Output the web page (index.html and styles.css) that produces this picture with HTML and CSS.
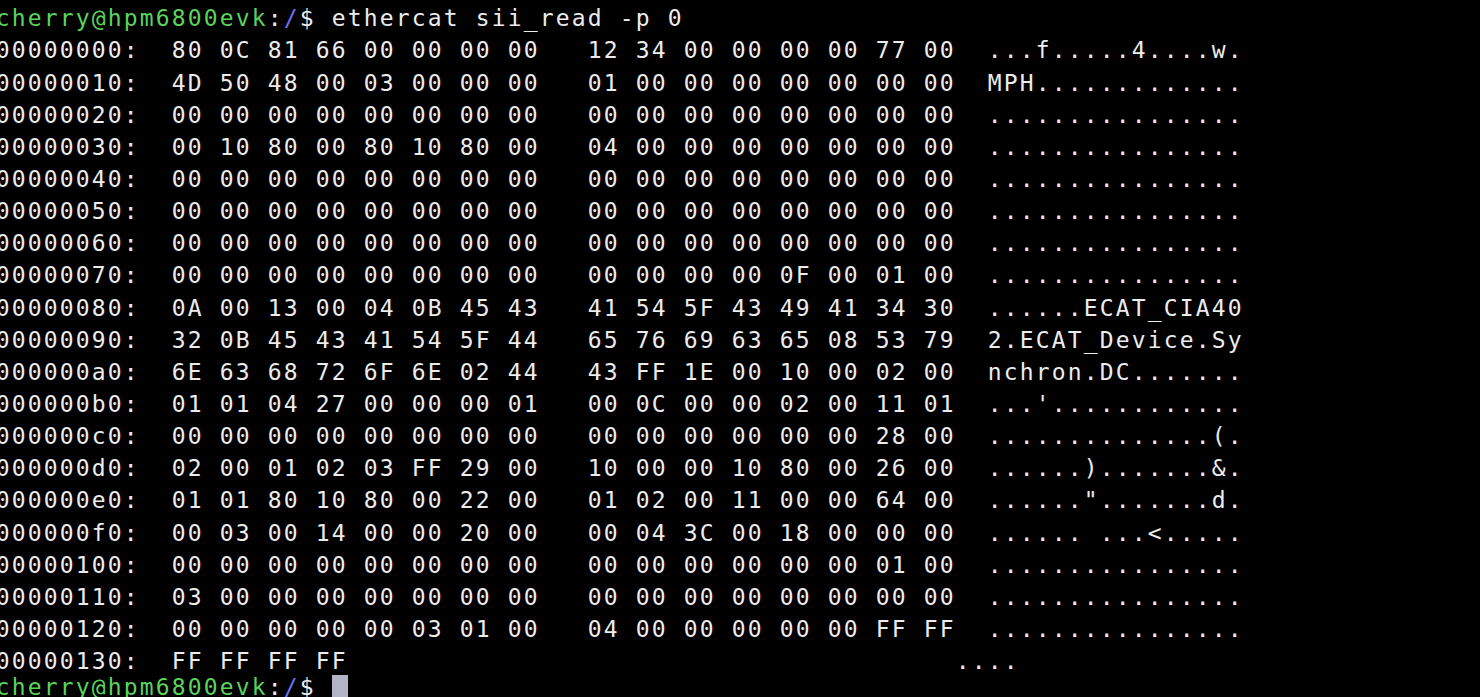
FILE: index.html
```html
<!DOCTYPE html>
<html lang="en">
<head>
<meta charset="utf-8">
<title>ethercat sii_read</title>
<link rel="stylesheet" href="styles.css">
</head>
<body>
<div class="term">
<div class="line"><span class="user">cherry@hpm6800evk</span>:<span class="path">/</span>$ ethercat sii_read -p 0</div>
<div class="line">00000000:  80 0C 81 66 00 00 00 00   12 34 00 00 00 00 77 00  ...f.....4....w.</div>
<div class="line">00000010:  4D 50 48 00 03 00 00 00   01 00 00 00 00 00 00 00  MPH.............</div>
<div class="line">00000020:  00 00 00 00 00 00 00 00   00 00 00 00 00 00 00 00  ................</div>
<div class="line">00000030:  00 10 80 00 80 10 80 00   04 00 00 00 00 00 00 00  ................</div>
<div class="line">00000040:  00 00 00 00 00 00 00 00   00 00 00 00 00 00 00 00  ................</div>
<div class="line">00000050:  00 00 00 00 00 00 00 00   00 00 00 00 00 00 00 00  ................</div>
<div class="line">00000060:  00 00 00 00 00 00 00 00   00 00 00 00 00 00 00 00  ................</div>
<div class="line">00000070:  00 00 00 00 00 00 00 00   00 00 00 00 0F 00 01 00  ................</div>
<div class="line">00000080:  0A 00 13 00 04 0B 45 43   41 54 5F 43 49 41 34 30  ......ECAT_CIA40</div>
<div class="line">00000090:  32 0B 45 43 41 54 5F 44   65 76 69 63 65 08 53 79  2.ECAT_Device.Sy</div>
<div class="line">000000a0:  6E 63 68 72 6F 6E 02 44   43 FF 1E 00 10 00 02 00  nchron.DC.......</div>
<div class="line">000000b0:  01 01 04 27 00 00 00 01   00 0C 00 00 02 00 11 01  ...'............</div>
<div class="line">000000c0:  00 00 00 00 00 00 00 00   00 00 00 00 00 00 28 00  ..............(.</div>
<div class="line">000000d0:  02 00 01 02 03 FF 29 00   10 00 00 10 80 00 26 00  ......).......&amp;.</div>
<div class="line">000000e0:  01 01 80 10 80 00 22 00   01 02 00 11 00 00 64 00  ......".......d.</div>
<div class="line">000000f0:  00 03 00 14 00 00 20 00   00 04 3C 00 18 00 00 00  ...... ...&lt;.....</div>
<div class="line">00000100:  00 00 00 00 00 00 00 00   00 00 00 00 00 00 01 00  ................</div>
<div class="line">00000110:  03 00 00 00 00 00 00 00   00 00 00 00 00 00 00 00  ................</div>
<div class="line">00000120:  00 00 00 00 00 03 01 00   04 00 00 00 00 00 FF FF  ................</div>
<div class="line">00000130:  FF FF FF FF                                      ....</div>
<div class="line prompt-bottom"><span class="user">cherry@hpm6800evk</span>:<span class="path">/</span>$ <span class="cursor"></span></div>
</div>
</body>
</html>
```

FILE: styles.css
```css
html, body {
  margin: 0;
  padding: 0;
  background: #000;
  height: 100%;
  overflow: hidden;
}

.term {
  margin-left: -4.3px;
  padding-top: 2.3px;
  font-family: "DejaVu Sans Mono", "Liberation Mono", monospace;
  font-size: 23px;
  letter-spacing: 2.153px;
  line-height: 32.15px;
  color: #ececec;
}

.line {
  white-space: pre;
  height: 32.15px;
}

.prompt-bottom {
  margin-top: -6px;
}

.user {
  color: #5ad45a;
}

.path {
  color: #6f6ff5;
}

.cursor {
  display: inline-block;
  width: 16px;
  height: 26.5px;
  vertical-align: -6px;
  background: #b3b3c6;
}
```
